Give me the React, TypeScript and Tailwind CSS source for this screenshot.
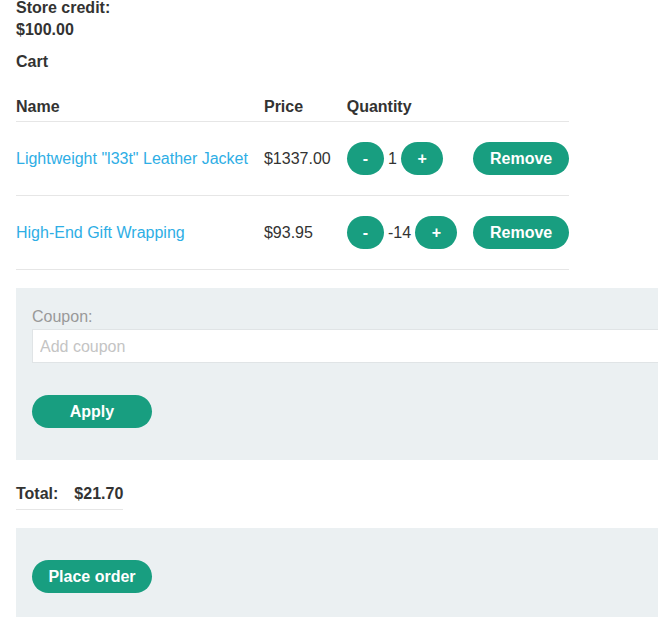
const items = [
  { name: 'Lightweight "l33t" Leather Jacket', price: "$1337.00", qty: 1 },
  { name: "High-End Gift Wrapping", price: "$93.95", qty: -14 },
];

function Pill({ children, className = "" }: { children: React.ReactNode; className?: string }) {
  return (
    <button
      className={
        "inline-flex h-[33px] items-center justify-center rounded-full bg-[#189e80] px-4 text-base font-bold text-white " +
        className
      }
    >
      {children}
    </button>
  );
}

export default function App() {
  return (
    <div
      className="overflow-hidden bg-white pl-4 text-base leading-[22px] text-[#333332]"
      style={{ fontFamily: '"Liberation Sans", Arial, sans-serif' }}
    >
      <div className="-mt-[3px] font-bold">
        <p>Store credit:</p>
        <p>$100.00</p>
      </div>
      <p className="mt-[10px] font-bold">Cart</p>

      <table className="mt-[23px] border-collapse text-left">
        <thead>
          <tr className="border-b border-[#e6e6e6]">
            <th className="pb-[3px] pr-4 font-bold">Name</th>
            <th className="pb-[3px] pr-4 font-bold">Price</th>
            <th className="pb-[3px] pr-4 font-bold">Quantity</th>
            <th className="w-[95px] pb-[3px]"></th>
          </tr>
        </thead>
        <tbody>
          {items.map((it) => (
            <tr key={it.name} className="h-[74px] border-b border-[#e6e6e6]">
              <td className="pr-4">
                <a className="text-[#2eaee5]" href="#">
                  {it.name}
                </a>
              </td>
              <td className="pr-4">{it.price}</td>
              <td className="pr-4 whitespace-nowrap">
                <div className="flex items-center gap-[4px]">
                  <Pill>-</Pill>
                  <span>{it.qty}</span>
                  <Pill className="px-[16.5px]">+</Pill>
                </div>
              </td>
              <td className="text-right">
                <Pill className="px-[16.5px]">Remove</Pill>
              </td>
            </tr>
          ))}
        </tbody>
      </table>

      <div className="mt-[18px] w-[700px] bg-[#ebf0f2] px-4 pb-[32px] pt-[18px]">
        <label className="block text-[#999999]">Coupon:</label>
        <input
          className="mt-[1px] block h-[34px] w-[700px] border border-[#e0e4e6] bg-white px-[7px] pt-[2px] text-base text-[#333332] outline-none placeholder:text-[#c4c4c4]"
          placeholder="Add coupon"
        />
        <Pill className="mt-[32px] min-w-[120px]">Apply</Pill>
      </div>

      <div className="mt-[23px] inline-flex gap-[16px] border-b border-[#e6e6e6] pb-[4px] font-bold">
        <span>Total:</span>
        <span>$21.70</span>
      </div>

      <div className="mt-[18px] w-[700px] bg-[#ebf0f2] px-4 pb-[24px] pt-[32px]">
        <Pill className="min-w-[120px]">Place order</Pill>
      </div>
    </div>
  );
}
